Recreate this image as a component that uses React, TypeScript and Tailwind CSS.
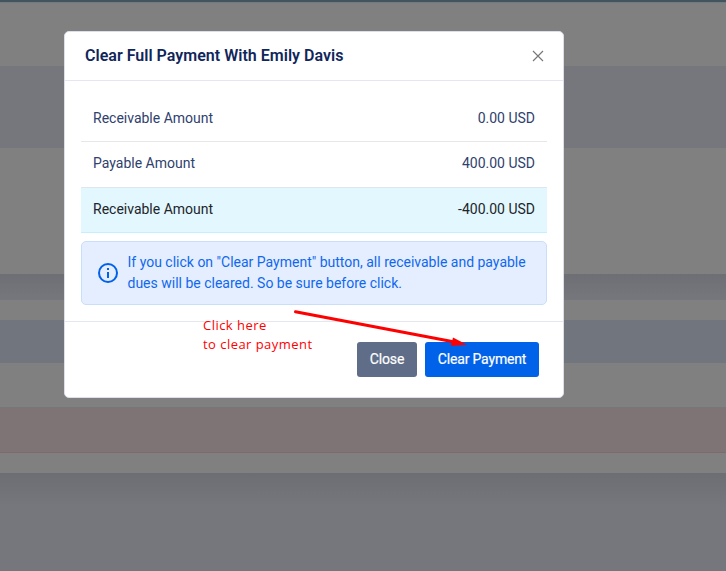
import React from "react";

const rows = [
  { label: "Receivable Amount", value: "0.00 USD", style: "h-[45px] border-[#e5e7ea] text-[#2f416d]" },
  { label: "Payable Amount", value: "400.00 USD", style: "h-[46px] border-[#e0e6ee] text-[#2f416d]" },
  { label: "Receivable Amount", value: "-400.00 USD", style: "h-[45px] border-[#c3effe] bg-[#e3f7ff] text-[#212529]" },
];

function Backdrop() {
  return (
    <div className="flex h-full flex-col bg-[#808080]">
      <div className="h-[2px] bg-[#42545e]" />
      <div className="h-px bg-[#6c7c82]" />
      <div className="h-[63px]" />
      <div className="h-[82px] bg-[#76777c]" />
      <div className="h-[126px]" />
      <div className="h-[26px] bg-gradient-to-b from-[#6e6f74] to-[#76777c]" />
      <div className="h-[20px]" />
      <div className="h-[43px] bg-[#70757e]" />
      <div className="h-[44px]" />
      <div className="h-[46px] border-t border-b border-t-[#777678] border-b-[#7e6a6d] bg-[#7f7475]" />
      <div className="h-[20px]" />
      <div className="h-[34px] bg-gradient-to-b from-[#6d6e73] to-[#76777c]" />
      <div className="flex-1 bg-[#76777c]" />
    </div>
  );
}

function Modal() {
  return (
    <div className="absolute top-[31px] left-[64px] flex h-[367px] w-[500px] flex-col rounded-[5px] border border-[#dcdfe9] bg-white">
      <div className="flex h-[49px] items-center justify-between border-b border-[#e6e6f3] pr-[18px] pl-5">
        <h5 className="text-[16px] leading-6 font-semibold tracking-[0.02px] text-[#10265a]">Clear Full Payment With Emily Davis</h5>
        <svg className="size-[14px]" viewBox="0 0 14 14" fill="none" stroke="#777777" strokeWidth="1.15">
          <path d="M2 2 12 12M12 2 2 12" />
        </svg>
      </div>
      <div className="h-[240px] px-4 pt-4">
        {rows.map((r, i) => (
          <div key={i} className={`flex items-center justify-between border-b px-3 pb-[2px] text-[14px] leading-[21px] ${r.style}`}>
            <span>{r.label}</span>
            <span>{r.value}</span>
          </div>
        ))}
        <div className="mt-2 flex h-[64px] items-center rounded-[5px] border border-[#c9defb] bg-[#e5eefe] pl-4 text-[#0f68ee]">
          <svg className="mr-[9.5px] size-5 shrink-0" viewBox="0 0 20 20">
            <circle cx="10" cy="10" r="9" fill="none" stroke="#0061eb" strokeWidth="2" />
            <path d="M10 5v2M10 9v6" stroke="#0061eb" strokeWidth="2" />
          </svg>
          <p className="text-[14px] leading-[21px] whitespace-nowrap">
            If you click on "Clear Payment" button, all receivable and payable
            <br />
            dues will be cleared. So be sure before click.
          </p>
        </div>
      </div>
      <div className="flex flex-1 items-center justify-end gap-2 border-t border-[#e4e7ee] pr-6 text-[14px] tracking-[-0.17px] text-white [-webkit-text-stroke:0.2px_white]">
        <button className="h-[35px] w-[60px] rounded-[3px] bg-[#606d88]">Close</button>
        <button className="h-[35px] w-[114px] rounded-[3px] bg-[#0061e9]">Clear Payment</button>
      </div>
    </div>
  );
}

function Annotation() {
  return (
    <>
      <p className="absolute top-[316px] left-[203px] font-['Open_Sans',sans-serif] text-[13px] leading-[19px] tracking-[0.46px] whitespace-nowrap text-[#ff0000]">
        Click here
        <br />
        to clear payment
      </p>
      <svg className="absolute top-[305px] left-[290px] h-[50px] w-[180px]" viewBox="290 305 180 50">
        <path d="M295.5 311.8 452 341.5" stroke="#ff0000" strokeWidth="3" strokeLinecap="round" />
        <path d="M453 337.5 467 344.8 451 346Z" fill="#ff0000" />
      </svg>
    </>
  );
}

export default function App() {
  return (
    <div className="relative h-[571px] w-[726px] overflow-hidden font-[Roboto,sans-serif]">
      <Backdrop />
      <Modal />
      <Annotation />
    </div>
  );
}
